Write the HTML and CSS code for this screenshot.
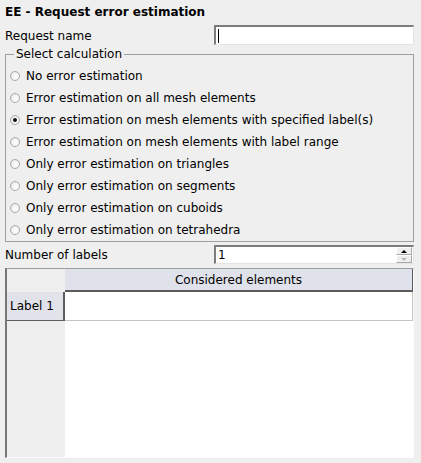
FILE: index.html
```html
<!DOCTYPE html>
<html>
<head>
<meta charset="utf-8">
<link rel="stylesheet" href="styles.css">
</head>
<body>
<div class="app">
  <div class="title">EE - Request error estimation</div>
  <div class="row req">
    <span class="lbl">Request name</span>
    <div class="input"><span class="caret"></span></div>
  </div>
  <fieldset class="group">
    <legend>Select calculation</legend>
    <div class="radio"><span class="circle"></span>No error estimation</div>
    <div class="radio"><span class="circle"></span>Error estimation on all mesh elements</div>
    <div class="radio"><span class="circle checked"></span>Error estimation on mesh elements with specified label(s)</div>
    <div class="radio"><span class="circle"></span>Error estimation on mesh elements with label range</div>
    <div class="radio"><span class="circle"></span>Only error estimation on triangles</div>
    <div class="radio"><span class="circle"></span>Only error estimation on segments</div>
    <div class="radio"><span class="circle"></span>Only error estimation on cuboids</div>
    <div class="radio"><span class="circle"></span>Only error estimation on tetrahedra</div>
  </fieldset>
  <div class="row num">
    <span class="lbl">Number of labels</span>
    <div class="spin">
      <span class="val">1</span>
      <div class="btns">
        <div class="btn up"><span class="tri-up"></span></div>
        <div class="btn down"><span class="tri-down"></span></div>
      </div>
    </div>
  </div>
  <div class="table">
    <div class="thead">
      <div class="corner"></div>
      <div class="hcell">Considered elements</div>
    </div>
    <div class="trow">
      <div class="vh">Label 1</div>
      <div class="cell"></div>
    </div>
    <div class="tfill">
      <div class="vfill"></div>
      <div class="wfill"></div>
    </div>
  </div>
</div>
</body>
</html>
```

FILE: styles.css
```css
html, body {
  margin: 0;
  padding: 0;
  background: #efefef;
}
body {
  font-family: "DejaVu Sans", sans-serif;
  font-size: 12px;
  color: #000;
  width: 421px;
  height: 463px;
  overflow: hidden;
}
.app {
  padding: 4px 7px 0 5px;
  display: flex;
  flex-direction: column;
}
.title {
  font-weight: bold;
  line-height: 16px;
  height: 16px;
}
.row {
  display: flex;
  align-items: center;
  justify-content: space-between;
}
.req {
  margin-top: 5px;
  height: 20px;
}
.lbl {
  padding-top: 1px;
}
.input {
  width: 200px;
  height: 20px;
  box-sizing: border-box;
  background: #fff;
  border-top: 2px solid #7c7c7c;
  border-left: 2px solid #7c7c7c;
  border-right: 1px solid #e4e4e4;
  border-bottom: 1px solid #e4e4e4;
  display: flex;
  align-items: center;
  padding-left: 2px;
}
.caret {
  width: 1px;
  height: 14px;
  background: #000;
}
.group {
  margin: 2px 0 0 0;
  padding: 4px 0 0 0;
  border: 1px solid #a0a0a0;
  min-width: 0;
}
.group legend {
  margin-left: 8px;
  padding: 0 2px;
  line-height: 14px;
}
.radio {
  height: 22px;
  display: flex;
  align-items: center;
  padding-left: 4px;
  gap: 6px;
  white-space: nowrap;
}
.circle {
  width: 10px;
  height: 10px;
  border-radius: 50%;
  border: 1px solid #aaaaaa;
  background: radial-gradient(circle at 60% 60%, #ffffff 0%, #f4f4f4 50%, #d6d6d6 100%);
  position: relative;
  flex: none;
  box-sizing: border-box;
}
.circle.checked::after {
  content: "";
  position: absolute;
  left: 2px;
  top: 2px;
  width: 4px;
  height: 4px;
  border-radius: 50%;
  background: #111;
}
.num {
  margin-top: 3px;
  height: 19px;
}
.spin {
  width: 200px;
  height: 19px;
  box-sizing: border-box;
  background: #fff;
  border-top: 2px solid #7c7c7c;
  border-left: 2px solid #7c7c7c;
  border-right: 1px solid #e4e4e4;
  border-bottom: 1px solid #e4e4e4;
  display: flex;
  align-items: center;
  justify-content: space-between;
  padding-left: 2px;
}
.val {
  line-height: 14px;
}
.btns {
  display: flex;
  flex-direction: column;
  width: 16px;
  height: 16px;
  margin-right: 1px;
}
.btn {
  flex: 1;
  background: #efefef;
  border-right: 1px solid #a8a8a8;
  border-bottom: 1px solid #a8a8a8;
  border-top: 1px solid #fff;
  border-left: 1px solid #fff;
  display: flex;
  align-items: center;
  justify-content: center;
  box-sizing: border-box;
}
.tri-up {
  width: 0;
  height: 0;
  border-left: 3px solid transparent;
  border-right: 3px solid transparent;
  border-bottom: 3px solid #000;
}
.tri-down {
  width: 0;
  height: 0;
  border-left: 3px solid transparent;
  border-right: 3px solid transparent;
  border-top: 3px solid #b8b8b8;
}
.table {
  margin-top: 4px;
  height: 190px;
  box-sizing: border-box;
  border-top: 1px solid #9c9c9c;
  border-left: 2px solid #777;
  border-right: 1px solid #fafafa;
  border-bottom: 1px solid #fafafa;
  display: flex;
  flex-direction: column;
  background: #fff;
}
.thead {
  display: flex;
  height: 23px;
  flex: none;
}
.corner {
  width: 58px;
  background: #efefef;
  flex: none;
}
.hcell {
  flex: 1;
  background: #dfe2ea;
  border-right: 1px solid #5c5c5c;
  border-bottom: 2px solid #5c5c5c;
  box-sizing: border-box;
  display: flex;
  align-items: center;
  justify-content: center;
}
.trow {
  display: flex;
  height: 29px;
  flex: none;
}
.vh {
  width: 58px;
  flex: none;
  box-sizing: border-box;
  background: #e2e3ea;
  border-right: 2px solid #5c5c5c;
  border-bottom: 1px solid #5c5c5c;
  display: flex;
  align-items: center;
  padding-left: 3px;
}
.cell {
  flex: 1;
  border-bottom: 1px solid #c4c4c4;
  border-right: 1px solid #c4c4c4;
}
.tfill {
  flex: 1;
  display: flex;
}
.vfill {
  width: 58px;
  flex: none;
  background: #efefef;
}
.wfill {
  flex: 1;
  background: #fff;
}
```
